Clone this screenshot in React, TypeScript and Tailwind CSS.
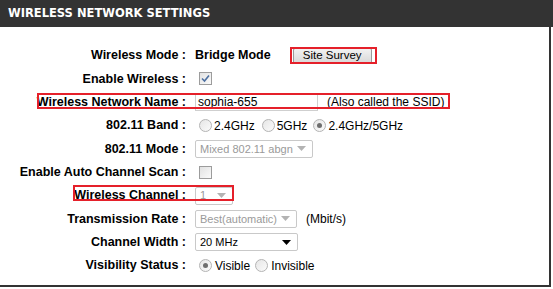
import React from "react";

const Radio: React.FC<{ checked?: boolean }> = ({ checked }) => (
  <span className="inline-flex h-[13px] w-[13px] items-center justify-center rounded-full border border-[#b4b4b4] bg-gradient-to-br from-[#e6e6e6] to-[#fbfbfb]">
    {checked && <span className="h-[5px] w-[5px] rounded-full bg-[#6e6e6e]" />}
  </span>
);

const Check: React.FC<{ checked?: boolean }> = ({ checked }) => (
  <span className="inline-flex h-[13px] w-[13px] items-center justify-center border border-[#9c9c9c] bg-gradient-to-br from-[#e2e2e2] to-[#fafafa]">
    {checked && (
      <svg width="9" height="9" viewBox="0 0 9 9">
        <path d="M1 4.5 L3.5 7 L8 1.5" fill="none" stroke="#4c6fa0" strokeWidth="1.6" />
      </svg>
    )}
  </span>
);

const Select: React.FC<{ text: string; width: string; disabled?: boolean }> = ({ text, width, disabled }) => (
  <span
    className={`flex h-[18px] items-center justify-between rounded-[2px] border border-[#c9c9c9] bg-white pl-[4px] pr-[6px] text-[11px] ${width} ${
      disabled ? "text-[#9a9a9a]" : "text-black"
    }`}
  >
    <span className="whitespace-nowrap">{text}</span>
    <svg width="9" height="5" viewBox="0 0 9 5" className="shrink-0">
      <path d="M0 0 H9 L4.5 5 Z" fill={disabled ? "#b3b3b3" : "#000"} />
    </svg>
  </span>
);

const rows: { label: string; value: React.ReactNode }[] = [
  {
    label: "Wireless Mode :",
    value: (
      <div className="flex items-center">
        <span className="text-[12.5px] font-bold">Bridge Mode</span>
        <button className="ml-[22px] h-[16px] w-[79px] rounded-[2px] border border-[#9a9a9a] bg-gradient-to-b from-[#f2f2f2] to-[#d8d8d8] text-[11.5px] leading-none text-black">
          Site Survey
        </button>
      </div>
    ),
  },
  { label: "Enable Wireless :", value: <span className="ml-[4px] flex"><Check checked /></span> },
  {
    label: "Wireless Network Name :",
    value: (
      <div className="flex items-center">
        <span className="flex h-[18px] w-[123px] items-center border border-[#cfcfcf] pl-[2px]">sophia-655</span>
        <span className="ml-[9px]">(Also called the SSID)</span>
      </div>
    ),
  },
  {
    label: "802.11 Band :",
    value: (
      <div className="flex items-center pl-[4px]">
        <Radio />
        <span className="ml-[2px]">2.4GHz</span>
        <span className="ml-[7px] flex"><Radio /></span>
        <span className="ml-[2px]">5GHz</span>
        <span className="ml-[6px] flex"><Radio checked /></span>
        <span className="ml-[2px]">2.4GHz/5GHz</span>
      </div>
    ),
  },
  { label: "802.11 Mode :", value: <Select text="Mixed 802.11 abgn" width="w-[118px]" disabled /> },
  { label: "Enable Auto Channel Scan :", value: <span className="ml-[4px] flex"><Check /></span> },
  { label: "Wireless Channel :", value: <Select text="1" width="w-[38px]" disabled /> },
  {
    label: "Transmission Rate :",
    value: (
      <div className="flex items-center">
        <Select text="Best(automatic)" width="w-[102px]" disabled />
        <span className="ml-[9px]">(Mbit/s)</span>
      </div>
    ),
  },
  { label: "Channel Width :", value: <Select text="20 MHz" width="w-[103px]" /> },
  {
    label: "Visibility Status :",
    value: (
      <div className="flex items-center pl-[4px]">
        <Radio checked />
        <span className="ml-[3px]">Visible</span>
        <span className="ml-[5px] flex"><Radio /></span>
        <span className="ml-[3px]">Invisible</span>
      </div>
    ),
  },
];

export default function App() {
  return (
    <div className="relative h-[289px] w-[553px] overflow-hidden bg-white font-['Liberation_Sans',Arial,sans-serif] text-[12px] text-black">
      <div className="flex h-[27px] items-center bg-[#333333] pl-[8px]">
        <h2 className="font-['DejaVu_Sans',Verdana,sans-serif] text-[11.5px] font-bold text-white">
          WIRELESS NETWORK SETTINGS
        </h2>
      </div>
      <div className="h-[260px] w-[551px] border-r-2 border-b-2 border-[#333333] pt-[17px]">
        <div className="grid grid-cols-[186px_1fr] auto-rows-[23.33px] gap-x-[9px]">
          {rows.map((r) => (
            <React.Fragment key={r.label}>
              <div className="flex items-center justify-end text-[12.5px] font-bold whitespace-nowrap">{r.label}</div>
              <div className="flex items-center">{r.value}</div>
            </React.Fragment>
          ))}
        </div>
      </div>

      {/* red annotation boxes */}
      <div className="absolute left-[290px] top-[47px] h-[17px] w-[87px] border-2 border-[#e5202a]" />
      <div className="absolute left-[37px] top-[93px] h-[16px] w-[413px] border-2 border-[#e5202a]" />
      <div className="absolute left-[73px] top-[185px] h-[16px] w-[161px] border-2 border-[#e5202a]" />
    </div>
  );
}
